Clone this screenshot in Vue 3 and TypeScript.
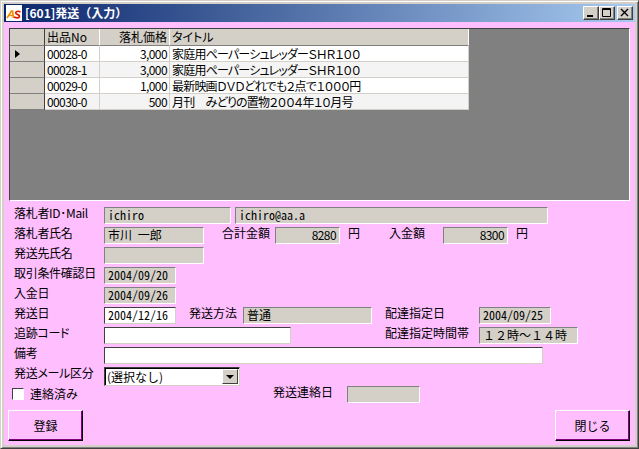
<script setup lang="ts">
interface Item { no: string; price: string; title: string }
const items: Item[] = [
  { no: '00028-0', price: '3,000', title: '家庭用ペーパーシュレッダーＳＨＲ１００' },
  { no: '00028-1', price: '3,000', title: '家庭用ペーパーシュレッダーＳＨＲ１００' },
  { no: '00029-0', price: '1,000', title: '最新映画ＤＶＤどれでも２点で１０００円' },
  { no: '00030-0', price: '500', title: '月刊　みどりの置物２００４年１０月号' },
]
</script>

<template>
  <div class="window">
    <div class="titlebar">
      <svg class="appicon" width="16" height="16" viewBox="0 0 16 16">
        <rect width="16" height="16" fill="#fff" />
        <path d="M1 13 L5.5 6 L6.5 6 L7.5 13 M3 10.5 H7.5" fill="none" stroke="#f09000" stroke-width="1.7" />
        <path d="M14.5 7 C12 5.5 9 6.5 10 8.5 C11 10 14 9.5 13.5 11.5 C12.5 13.5 10 13 8 12" fill="none" stroke="#e02000" stroke-width="1.7" />
      </svg>
      <span class="title">[601]発送（入力）</span>
      <div class="capbtns">
        <div class="capbtn"><svg width="10" height="10" viewBox="0 0 10 10"><rect x="1" y="7" width="6" height="2" fill="#000" /></svg></div>
        <div class="capbtn"><svg width="10" height="10" viewBox="0 0 10 10"><path d="M0.5 0.5 H8.5 V8.5 H0.5 Z M0.5 1.5 H8.5" fill="none" stroke="#000" /></svg></div>
        <div class="capbtn close"><svg width="10" height="10" viewBox="0 0 10 10"><path d="M1 1 L8 8 M8 1 L1 8" fill="none" stroke="#000" stroke-width="1.4" /></svg></div>
      </div>
    </div>
    <div class="client">
      <div class="grid">
        <div class="table">
          <div class="thead">
            <div class="rh"></div>
            <div class="th c1">出品No</div>
            <div class="th c2">落札価格</div>
            <div class="th c3">タイトル</div>
          </div>
          <div v-for="(it, i) in items" :key="it.no" class="tr" :class="{ alt: i % 2 === 1 }">
            <div class="rh"><span v-if="i === 0" class="arrow"></span></div>
            <div class="td c1 num">{{ it.no }}</div>
            <div class="td c2 num right">{{ it.price }}</div>
            <div class="td c3 tight">{{ it.title }}</div>
          </div>
        </div>
      </div>

      <div class="form">
        <div class="row">
          <label class="lab">落札者ID･Mail</label>
          <div class="f ro mono w127">ichiro</div>
          <div class="f ro mono w313 ml4">ichiro@aa.a</div>
        </div>
        <div class="row">
          <label class="lab">落札者氏名</label>
          <div class="f ro w100 name">市川 一郎</div>
          <label class="ml18 w53">合計金額</label>
          <div class="f ro num right w65">8280</div>
          <label class="ml8 w41">円</label>
          <label class="w54">入金額</label>
          <div class="f ro num right w65">8300</div>
          <label class="ml8">円</label>
        </div>
        <div class="row">
          <label class="lab">発送先氏名</label>
          <div class="f ro w100"></div>
        </div>
        <div class="row">
          <label class="lab">取引条件確認日</label>
          <div class="f ro mono w72">2004/09/20</div>
        </div>
        <div class="row">
          <label class="lab">入金日</label>
          <div class="f ro mono w72">2004/09/26</div>
        </div>
        <div class="row">
          <label class="lab">発送日</label>
          <div class="f wh mono w72">2004/12/16</div>
          <label class="ml13 w54">発送方法</label>
          <div class="f ro w129">普通</div>
          <label class="ml13 w94">配達指定日</label>
          <div class="f ro mono w72">2004/09/25</div>
        </div>
        <div class="row">
          <label class="lab">追跡コード</label>
          <div class="f wh w187"></div>
          <label class="ml94 w94">配達指定時間帯</label>
          <div class="f ro w99">１２時～１４時</div>
        </div>
        <div class="row">
          <label class="lab">備考</label>
          <div class="f wh w439"></div>
        </div>
        <div class="row">
          <label class="lab">発送メール区分</label>
          <div class="f wh combo w136">
            <span class="combotext">(選択なし)</span>
            <span class="drop"><span class="droptri"></span></span>
          </div>
        </div>
        <div class="row last">
          <span class="check"></span>
          <label class="chklab">連絡済み</label>
          <label class="w74">発送連絡日</label>
          <div class="f ro w73"></div>
        </div>
      </div>

      <div class="actions">
        <button class="btn" type="button">登録</button>
        <button class="btn" type="button">閉じる</button>
      </div>
    </div>
  </div>
</template>

<style>
html, body { margin: 0; background: #d4d0c8; }
</style>

<style scoped>
.window {
  width: 639px;
  height: 449px;
  box-sizing: border-box;
  background: #d4d0c8;
  border: 1px solid;
  border-color: #d4d0c8 #404040 #404040 #d4d0c8;
  box-shadow: inset 1px 1px 0 #fff, inset -1px -1px 0 #808080;
  padding: 3px;
  display: flex;
  flex-direction: column;
  font-family: "Noto Sans CJK JP", sans-serif;
  font-size: 12px;
  color: #000;
}
.titlebar {
  height: 18px;
  flex: none;
  background: linear-gradient(90deg, #0a246a, #a6caf0);
  display: flex;
  align-items: center;
  padding-left: 2px;
  padding-right: 2px;
}
.appicon { flex: none; }
.title {
  margin-left: 3px;
  color: #fff;
  font-weight: 700;
  font-size: 12px;
  line-height: 18px;
}
.capbtns { margin-left: auto; display: flex; }
.capbtn {
  width: 16px;
  height: 14px;
  box-sizing: border-box;
  background: #d4d0c8;
  border: 1px solid;
  border-color: #fff #404040 #404040 #fff;
  box-shadow: inset -1px -1px 0 #808080;
  display: flex;
  align-items: center;
  justify-content: center;
}
.capbtn.close { margin-left: 2px; }
.client {
  flex: 1;
  background: #ffbfff;
  padding: 6px 5px 0 4px;
  display: flex;
  flex-direction: column;
  min-height: 0;
}
.grid {
  height: 173px;
  flex: none;
  box-sizing: border-box;
  margin-left: 1px;
  background: #808080;
  border: 1px solid;
  border-color: #404040 #fff #fff #404040;
}
.table { width: 459px; }
.thead, .tr { display: flex; }
.thead { height: 17px; background: #d4d0c8; }
.tr { height: 16px; background: #fff; }
.tr.alt { background: #f4f4f4; }
.rh {
  width: 35px;
  flex: none;
  box-sizing: border-box;
  background: #d4d0c8;
  border-right: 1px solid #404040;
  border-bottom: 1px solid #808080;
  display: flex;
  align-items: center;
  padding-left: 5px;
}
.arrow {
  width: 0;
  height: 0;
  border-left: 5px solid #000;
  border-top: 4px solid transparent;
  border-bottom: 4px solid transparent;
}
.th, .td {
  box-sizing: border-box;
  line-height: 15px;
  white-space: nowrap;
  overflow: hidden;
  padding: 0 2px;
  flex: none;
}
.th { border-right: 1px solid #fff; border-bottom: 1px solid #808080; }
.td { border-right: 1px solid #d4d0c8; border-bottom: 1px solid #d4d0c8; }
.c1 { width: 55px; }
.c2 { width: 70px; text-align: right; }
.c3 { width: 299px; font-feature-settings: "palt"; }
.tight { letter-spacing: -0.8px; }
.right { text-align: right; }
.num { letter-spacing: -0.6px; }
.form {
  height: 208px;
  flex: none;
  padding-top: 6px;
  box-sizing: border-box;
  display: flex;
  flex-direction: column;
}
.row {
  height: 20px;
  flex: none;
  display: flex;
  align-items: flex-start;
  padding-left: 6px;
  white-space: nowrap;
  line-height: 16px;
}
.row label { margin-top: -2px; }
.row.last { padding-left: 4px; margin-top: -1px; }
.lab { width: 90px; flex: none; font-feature-settings: "palt"; letter-spacing: -0.3px; }
.f {
  height: 17px;
  box-sizing: border-box;
  flex: none;
  border: 1px solid;
  border-color: #808080 #fff #fff #808080;
  padding: 0 3px;
  line-height: 13px;
  overflow: hidden;
}
.ro { background: #d4d0c8; }
.wh { background: #fff; border-color: #404040 #d4d0c8 #d4d0c8 #404040; }
.mono { font-feature-settings: "hwid"; }
.name { word-spacing: 3px; }
.w54 { width: 54px; flex: none; }
.w53 { width: 53px; flex: none; }
.w41 { width: 41px; flex: none; }
.w65 { width: 65px; }
.w72 { width: 72px; }
.w73 { width: 73px; }
.w74 { width: 74px; flex: none; }
.w94 { width: 94px; flex: none; }
.w99 { width: 99px; }
.w100 { width: 100px; }
.w127 { width: 127px; }
.w129 { width: 129px; }
.w136 { width: 136px; }
.w187 { width: 187px; }
.w313 { width: 313px; }
.w439 { width: 439px; }
.ml4 { margin-left: 4px; }
.ml8 { margin-left: 8px; }
.ml13 { margin-left: 13px; }
.ml18 { margin-left: 18px; }
.ml94 { margin-left: 94px; }
.combo {
  height: 19px;
  display: flex;
  padding: 0 1px 0 2px;
  align-items: center;
  box-shadow: inset 1px 1px 0 #000;
}
.combotext { flex: 1; }
.drop {
  width: 16px;
  height: 15px;
  box-sizing: border-box;
  background: #d4d0c8;
  border: 1px solid;
  border-color: #fff #404040 #404040 #fff;
  display: flex;
  align-items: center;
  justify-content: center;
}
.droptri {
  width: 0;
  height: 0;
  border-top: 4px solid #000;
  border-left: 4px solid transparent;
  border-right: 4px solid transparent;
}
.check {
  width: 12px;
  height: 12px;
  box-sizing: border-box;
  background: #fff;
  border: 1px solid;
  border-color: #404040 #fff #fff #404040;
  flex: none;
  margin-top: 2px;
}
.row .chklab { margin: 0 0 0 6px; width: 243px; flex: none; }
.actions {
  display: flex;
  justify-content: space-between;
  padding-top: 1px;
}
.btn {
  width: 75px;
  height: 31px;
  box-sizing: border-box;
  background: #ffbfff;
  border: 1px solid;
  border-color: #fff #000 #000 #fff;
  box-shadow: inset -1px -1px 0 #800080;
  font-family: inherit;
  font-size: 12px;
  padding: 0;
  color: #000;
}
</style>
